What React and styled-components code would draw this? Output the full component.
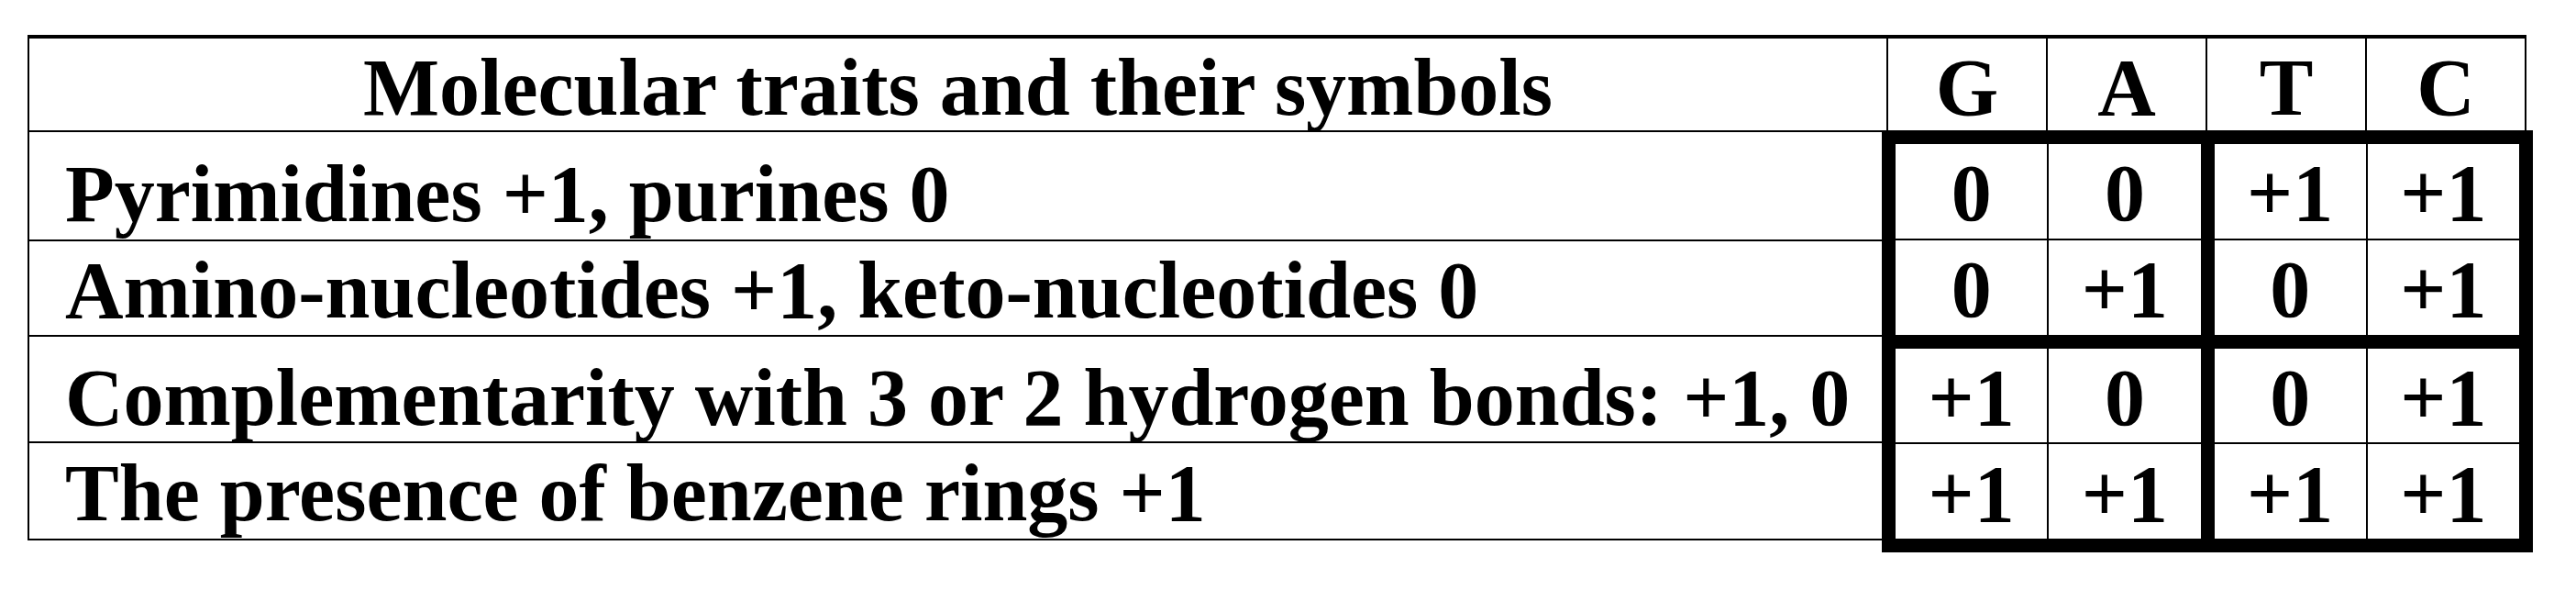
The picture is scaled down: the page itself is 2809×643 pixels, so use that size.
import React from 'react';
import styled, { createGlobalStyle } from 'styled-components';

const GlobalStyle = createGlobalStyle`
  html, body {
    margin: 0;
    background: #fff;
  }
  body {
    font-family: "Liberation Serif", "Times New Roman", serif;
    color: #000;
  }
`;

const Page = styled.div`
  box-sizing: border-box;
  width: 2809px;
  height: 643px;
  padding: 38px 0 0 30px;
`;

const Table = styled.div`
  display: flex;
  flex-direction: column;
  align-items: flex-start;
  width: max-content;
  font-size: 88px;
  font-weight: bold;
  line-height: 1;
  white-space: nowrap;
`;

const HeaderRow = styled.div`
  display: flex;
  box-sizing: border-box;
  height: 104px;
  border-top: 4px solid #000;
`;

const HeadCell = styled.div`
  display: flex;
  align-items: center;
  justify-content: center;
  flex: none;
  box-sizing: border-box;
  width: ${props => props.$width}px;
  padding-top: 7px;
  border-right: 2px solid #000;
  border-left: ${props => (props.$first ? '2px solid #000' : 'none')};
`;

const Body = styled.div`
  display: flex;
  align-items: flex-start;
`;

const Labels = styled.div`
  display: flex;
  flex-direction: column;
  flex: none;
  box-sizing: border-box;
  width: 2022px;
  border-left: 2px solid #000;
  border-top: 2px solid #000;
`;

const LabelCell = styled.div`
  display: flex;
  align-items: center;
  box-sizing: border-box;
  height: ${props => props.$height}px;
  padding: ${props => props.$offset}px 0 0 39px;
  border-bottom: 2px solid #000;
`;

// thick frame: black background shows through padding and gaps
const Values = styled.div`
  display: grid;
  grid-template-columns: 1fr 1fr;
  grid-template-rows: 1fr 1fr;
  gap: 15px;
  flex: none;
  box-sizing: border-box;
  width: 710px;
  height: 460px;
  padding: 15px;
  background: #000;
`;

const Quad = styled.div`
  display: grid;
  grid-template-columns: 1fr 1fr;
  grid-template-rows: 1fr 1fr;
  gap: 2px;
  background: #000;
`;

const Cell = styled.div`
  display: flex;
  align-items: center;
  justify-content: center;
  padding-top: 6px;
  background: #fff;
`;

const bases = ['G', 'A', 'T', 'C'];

const traits = [
  { text: 'Pyrimidines +1, purines 0', height: 119, offset: 19 },
  { text: 'Amino-nucleotides +1, keto-nucleotides 0', height: 104, offset: 6 },
  { text: 'Complementarity with 3 or 2 hydrogen bonds: +1, 0', height: 116, offset: 20 },
  { text: 'The presence of benzene rings +1', height: 106, offset: 6 },
];

const quads = [
  ['0', '0', '0', '+1'],
  ['+1', '+1', '0', '+1'],
  ['+1', '0', '+1', '+1'],
  ['0', '+1', '+1', '+1'],
];

function App() {
  return (
    <>
      <GlobalStyle />
      <Page>
        <Table>
          <HeaderRow>
            <HeadCell $first $width={2029}>Molecular traits and their symbols</HeadCell>
            {bases.map(base => (
              <HeadCell key={base} $width={174}>{base}</HeadCell>
            ))}
          </HeaderRow>
          <Body>
            <Labels>
              {traits.map(trait => (
                <LabelCell key={trait.text} $height={trait.height} $offset={trait.offset}>
                  {trait.text}
                </LabelCell>
              ))}
            </Labels>
            <Values>
              {quads.map((cells, i) => (
                <Quad key={i}>
                  {cells.map((value, j) => (
                    <Cell key={j}>{value}</Cell>
                  ))}
                </Quad>
              ))}
            </Values>
          </Body>
        </Table>
      </Page>
    </>
  );
}

export default App;
